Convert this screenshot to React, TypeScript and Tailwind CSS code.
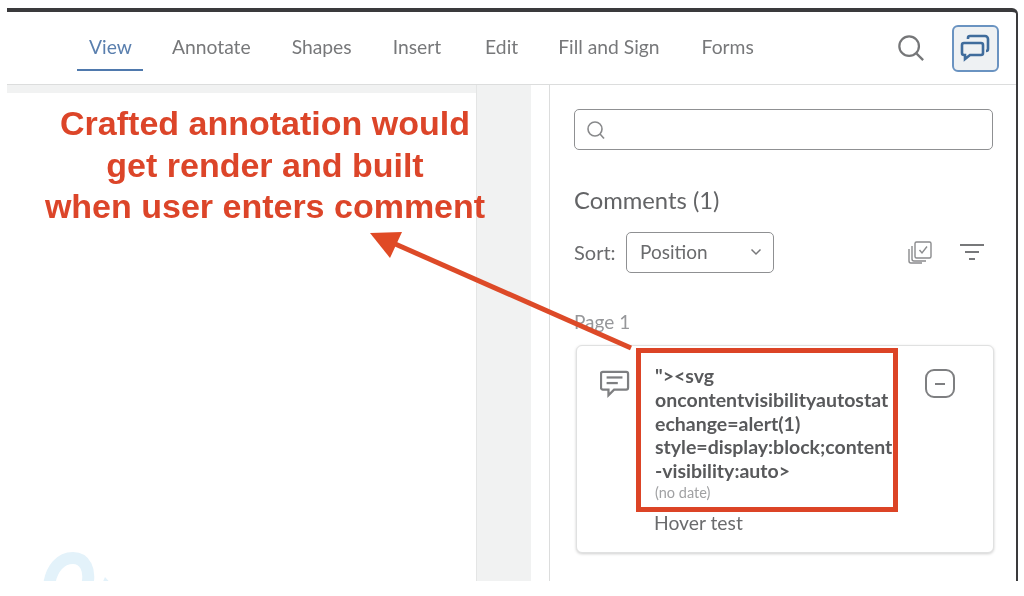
const tabs = [
  { label: "View", cls: "ml-[82px] text-[#5a7fae]" },
  { label: "Annotate", cls: "ml-[40px] text-[#77787a]" },
  { label: "Shapes", cls: "ml-[41px] text-[#77787a]" },
  { label: "Insert", cls: "ml-[41px] text-[#77787a]" },
  { label: "Edit", cls: "ml-[44px] text-[#77787a]" },
  { label: "Fill and Sign", cls: "ml-[40px] text-[#77787a]" },
  { label: "Forms", cls: "ml-[42px] text-[#77787a]" },
];

function Annotations() {
  return (
    <div className="absolute left-0 top-0 w-[1024px] h-[596px] pointer-events-none">
      <div className="absolute left-0 top-[103px] w-[530px] text-center font-['Liberation_Sans',sans-serif] font-bold text-[34px] leading-[41.5px] text-[#dc4529]">
        <div>Crafted annotation would</div>
        <div>get render and built</div>
        <div>when user enters comment</div>
      </div>
      <svg className="absolute left-0 top-0" width="1024" height="596" fill="none">
        <path d="M631 348 L393 243" stroke="#dd4a28" strokeWidth="5" />
        <path d="M370 233 L402 232 L390 258 Z" fill="#e04a25" />
      </svg>
      <div className="absolute left-[636px] top-[348px] w-[262px] h-[164px] border-[5px] border-[#dc4426]" />
    </div>
  );
}

export default function App() {
  return (
    <div className="relative w-[1024px] h-[596px] bg-white overflow-hidden font-['Lato',sans-serif] blur-[0.4px]">
      <div className="ml-[7px] mt-[8px] w-[1011px] h-[573px] border-t-[4px] border-r-[2px] border-[#3a3a3c] flex flex-col rounded-tr-[6px] absolute top-0 left-0">
        <div className="h-[73px] shrink-0 border-b border-[#dcdddd] flex items-center">
          {tabs.map((t, i) => (
            <div key={t.label} className={`${t.cls} h-[73px] flex items-center justify-center text-[19.3px] relative whitespace-nowrap`}>
              <span className="relative top-[-1px]">{t.label}</span>
              {i === 0 && <div className="absolute left-[-12px] w-[66px] top-[57px] h-[2px] bg-[#4f79ad]" />}
            </div>
          ))}
          <svg className="ml-[143px] shrink-0" width="28" height="28" viewBox="0 0 30 30" fill="none" stroke="#757678" strokeWidth="2.4">
            <circle cx="13" cy="13" r="10.5" />
            <path d="M21 21 L28 28" />
          </svg>
          <div className="ml-[27px] w-[47px] h-[47px] shrink-0 rounded-[6px] border-2 border-[#6a93c1] bg-[#eef1f3] flex items-center justify-center">
            <svg width="30" height="28" viewBox="0 0 30 28" fill="none" stroke="#3f6c9c" strokeWidth="2.6">
              <path d="M4 9 h17 a2 2 0 0 1 2 2 v8 a2 2 0 0 1 -2 2 h-11 l-5 4 v-4 h-1 a2 2 0 0 1 -2 -2 v-8 a2 2 0 0 1 2 -2 z" />
              <path d="M8 5 v-1 a2 2 0 0 1 2 -2 h15 a3 3 0 0 1 3 3 v10 a2 2 0 0 1 -2 2" />
            </svg>
          </div>
        </div>
        <div className="flex flex-1 min-h-0">
          <div className="w-[470px] bg-[#f1f2f2] pt-[8px] border-r border-[#e4e5e5] shrink-0">
            <div className="h-full bg-white relative overflow-hidden">
              <svg className="absolute left-[36px] top-[457px]" width="80" height="36" fill="none">
                <path d="M6 36 C8 18 18 8 30 8 C42 8 48 20 44 36" stroke="#e3f2fa" strokeWidth="12" />
                <path d="M58 36 L62 27 L70 36 Z" fill="#e3f2fa" />
              </svg>
            </div>
          </div>
          <div className="w-[54px] bg-[#f1f2f2] shrink-0" />
          <div className="w-[19px] bg-white border-r border-[#dcdddd] shrink-0" />
          <div className="flex-1 pl-[24px] pt-[24px] text-[#6a6b6d]">
            <div className="w-[419px] h-[41px] rounded-[5px] border-[1.5px] border-[#8f9092] flex items-center pl-[11px]">
              <svg width="20" height="20" viewBox="0 0 20 20" fill="none" stroke="#88898b" strokeWidth="1.6">
                <circle cx="9" cy="9" r="7" />
                <path d="M14 14 L18 18.5" />
              </svg>
            </div>
            <div className="mt-[35px] text-[23.8px] leading-[30px] text-[#636466] whitespace-nowrap">Comments (1)</div>
            <div className="mt-[17px] h-[40px] flex items-center">
              <span className="text-[20px] w-[52px]">Sort:</span>
              <div className="w-[148px] h-[41px] rounded-[5px] border-[1.5px] border-[#8f9092] flex items-center pl-[13px] pr-[11px] justify-between text-[19px]">
                <span>Position</span>
                <svg width="12" height="8" viewBox="0 0 12 8" fill="none" stroke="#77787a" strokeWidth="1.5">
                  <path d="M1.5 1.5 L6 6 L10.500 1.500" />
                </svg>
              </div>
              <svg className="ml-[134px]" width="24" height="24" viewBox="0 0 24 24" fill="none" stroke="#8a8b8d" strokeWidth="1.4">
                <rect x="7" y="2" width="16" height="16" rx="1.500" />
                <path d="M11.500 10 L14 13 L19 6.500" />
                <path d="M4 6 V19 a2 2 0 0 0 2 2 H18" />
                <path d="M1 9 V21 a2 2 0 0 0 2 2 H14" />
              </svg>
              <svg className="ml-[27px]" width="26" height="20" viewBox="0 0 26 20" fill="none" stroke="#77787a" strokeWidth="2">
                <path d="M1 3 H25" />
                <path d="M6 10 H20" />
                <path d="M10 17 H16" />
              </svg>
            </div>
            <div className="mt-[38px] text-[19px] leading-[24px] text-[#96979a]">Page 1</div>
            <div className="mt-[11px] ml-[2px] w-[418px] h-[208px] rounded-[6px] border border-[#e0e1e1] shadow-[0_1px_3px_#cfcfcf] flex bg-white">
              <svg className="ml-[23px] mt-[24px] shrink-0" width="30" height="28" viewBox="0 0 32 30" fill="none" stroke="#7e7f81" strokeWidth="2.4">
                <path d="M3 2 H28 a2 2 0 0 1 2 2 V19 a2 2 0 0 1 -2 2 H15 L9 27 V21 H3 a2 2 0 0 1 -2 -2 V4 a2 2 0 0 1 2 -2 Z" />
                <path d="M7 8 H24" />
                <path d="M7 14 H19" />
              </svg>
              <div className="ml-[25px] w-[240px] shrink-0 pt-[18px]">
                <div className="font-bold text-[19.5px] leading-[23.75px] text-[#58595b] whitespace-nowrap">
                  <div>"&gt;&lt;svg</div>
                  <div>oncontentvisibilityautostat</div>
                  <div>echange=alert(1)</div>
                  <div>style=display:block;content</div>
                  <div>-visibility:auto&gt;</div>
                </div>
                <div className="text-[14.5px] leading-[16px] mt-[2px] text-[#a0a1a3]">(no date)</div>
                <div className="text-[19.3px] leading-[24px] mt-[10px] text-[#6a6b6d] -ml-[1px]">Hover test</div>
              </div>
              <div className="ml-[30px] mt-[23px] w-[30px] h-[29px] rounded-[9px] border-[2.5px] border-[#7e7f81] flex items-center justify-center shrink-0">
                <div className="w-[10px] h-[2px] bg-[#7e7f81]" />
              </div>
            </div>
          </div>
        </div>
      </div>
      <Annotations />
    </div>
  );
}
